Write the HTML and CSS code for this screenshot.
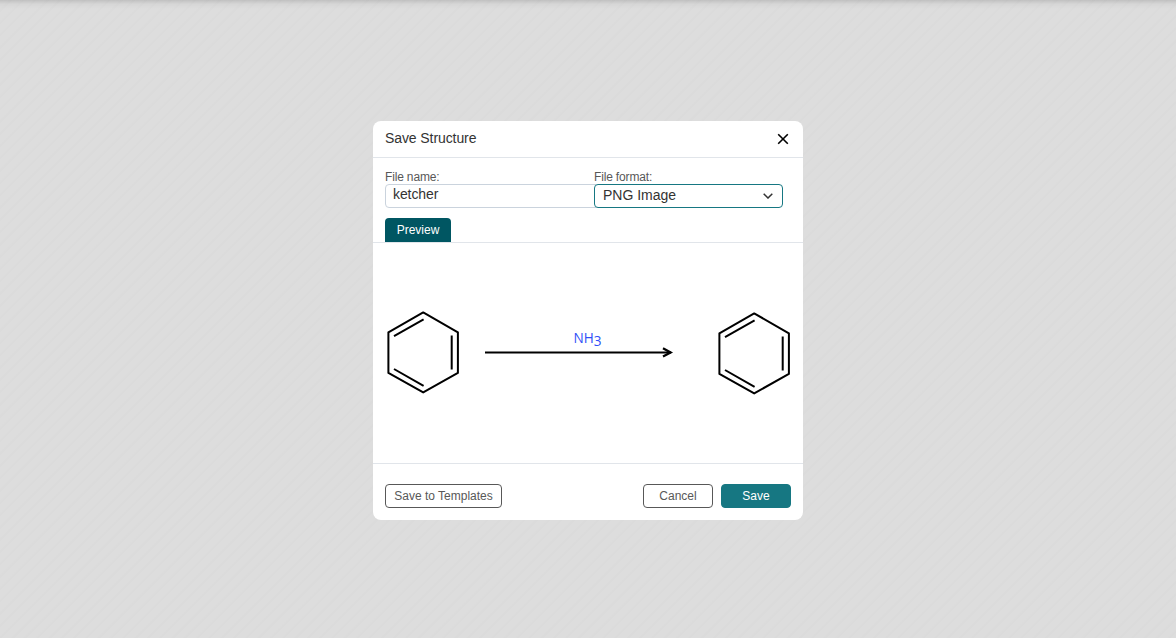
FILE: index.html
```html
<!DOCTYPE html>
<html lang="en">
<head>
<meta charset="utf-8">
<title>Save Structure</title>
<link rel="stylesheet" href="styles.css">
</head>
<body>
<main class="overlay">
  <section class="dialog">
    <header class="dialog-header">
      <h1 class="title">Save Structure</h1>
      <svg class="close" viewBox="0 0 12 12"><path d="M1.2 1.2l9.6 9.6M10.8 1.2l-9.6 9.6"/></svg>
    </header>
    <div class="form">
      <label class="field field-name">
        <span class="label">File name:</span>
        <span class="control input">ketcher</span>
      </label>
      <label class="field field-format">
        <span class="label">File format:</span>
        <span class="control select"><span class="select-value">PNG Image</span>
          <svg class="chevron" viewBox="0 0 10 6"><path d="M.7.7L5 5 9.3.7"/></svg>
        </span>
      </label>
    </div>
    <div class="tabs"><span class="tab">Preview</span></div>
    <div class="preview">
      <svg class="drawing" viewBox="373 243 430 220">
        <g class="bonds">
          <path d="M423.2 312.4L457.9 332.3V372.9L423.2 392.4L388.4 372.9V332.3ZM451.7 335.5V369.5M423.6 319.3L394 336.1M394 369L423.6 385.8"/>
          <path d="M754.2 313.4L788.9 333.3V373.9L754.2 393.4L719.4 373.9V333.3ZM782.7 336.5V370.5M754.6 320.3L725 337.1M725 370L754.6 386.8"/>
          <path d="M485 352.4H671"/>
          <path class="arrowhead" d="M663 348.3L670.6 352.4L663 356.5"/>
        </g>
        <text class="atom" x="573.6" y="342.6">NH</text>
        <text class="atom" x="593.7" y="346.4">3</text>
      </svg>
    </div>
    <footer class="dialog-footer">
      <button class="button button-template">Save to Templates</button>
      <button class="button">Cancel</button>
      <button class="button button-primary">Save</button>
    </footer>
  </section>
</main>
</body>
</html>
```
FILE: styles.css
```css
* { box-sizing: border-box; }
body {
  margin: 0;
  font-family: "Liberation Sans", Arial, sans-serif;
  color: #333;
}
.overlay {
  height: 638px;
  padding-top: 121px;
  background:
    linear-gradient(to bottom, rgba(0,0,0,.13), rgba(0,0,0,.03) 4px, transparent 9px),
    repeating-linear-gradient(135deg, #dddddd 0, #dddddd 6px, #dbdbdb 7.2px, #dbdbdb 8.7px);
}
.dialog {
  width: 430px;
  height: 399px;
  margin: 0 auto;
  display: flex;
  flex-direction: column;
  background: #fff;
  border-radius: 8px;
}
.dialog-header {
  height: 37px;
  padding: 0 14px 1px 12px;
  display: flex;
  align-items: center;
  justify-content: space-between;
  border-bottom: 1px solid #e1e5ea;
}
.title { margin: 0; padding-bottom: 2px; font-size: 14px; font-weight: 400; line-height: 18px; letter-spacing: -.09px; }
.close { width: 12px; height: 12px; margin-top: 1px; fill: none; stroke: #000; stroke-width: 1.6; }
.form { height: 60px; padding: 12px 20px 0 12px; display: flex; }
.field { display: flex; flex-direction: column; }
.field-name { width: 209px; }
.field-format { width: 189px; }
.label { height: 14px; font-size: 12px; line-height: 14px; letter-spacing: -.16px; color: #585858; }
.control { height: 24px; display: flex; font-size: 14px; border: 1px solid #cad3dd; border-radius: 4px; }
.input { width: 215px; padding-left: 7px; line-height: 19px; letter-spacing: -.1px; }
.select {
  position: relative;
  padding: 0 9px 0 8px;
  align-items: center;
  justify-content: space-between;
  background: #fff;
  border-color: #167782;
}
.select-value { line-height: 21px; padding-bottom: 1px; }
.chevron { width: 10px; height: 6px; fill: none; stroke: #333; stroke-width: 1.5; }
.tabs { height: 25px; padding-left: 12px; display: flex; border-bottom: 1px solid #e1e5ea; }
.tab {
  width: 66px;
  height: 24px;
  font-size: 12px;
  line-height: 24px;
  text-align: center;
  color: #fff;
  background: #005662;
  border-radius: 4px 4px 0 0;
}
.preview { height: 221px; border-bottom: 1px solid #e1e5ea; }
.drawing { display: block; width: 430px; height: 220px; }
.bonds { fill: none; stroke: #000; stroke-width: 2; stroke-linejoin: round; }
.arrowhead { stroke-width: 2.3; stroke-linejoin: miter; }
.atom { font-family: "Open Sans", "Noto Sans", sans-serif; font-size: 13.6px; fill: #304ff7; }
.dialog-footer { padding: 20px 12px 0; display: flex; gap: 8px; }
.button {
  width: 70px;
  height: 24px;
  padding: 0;
  font: 12px/22px "Liberation Sans", Arial, sans-serif;
  color: #585858;
  background: #fff;
  border: 1px solid #585858;
  border-radius: 4px;
}
.button-template { width: 117px; margin-right: auto; }
.button-primary { color: #fff; background: #167782; border-color: #167782; }
```
